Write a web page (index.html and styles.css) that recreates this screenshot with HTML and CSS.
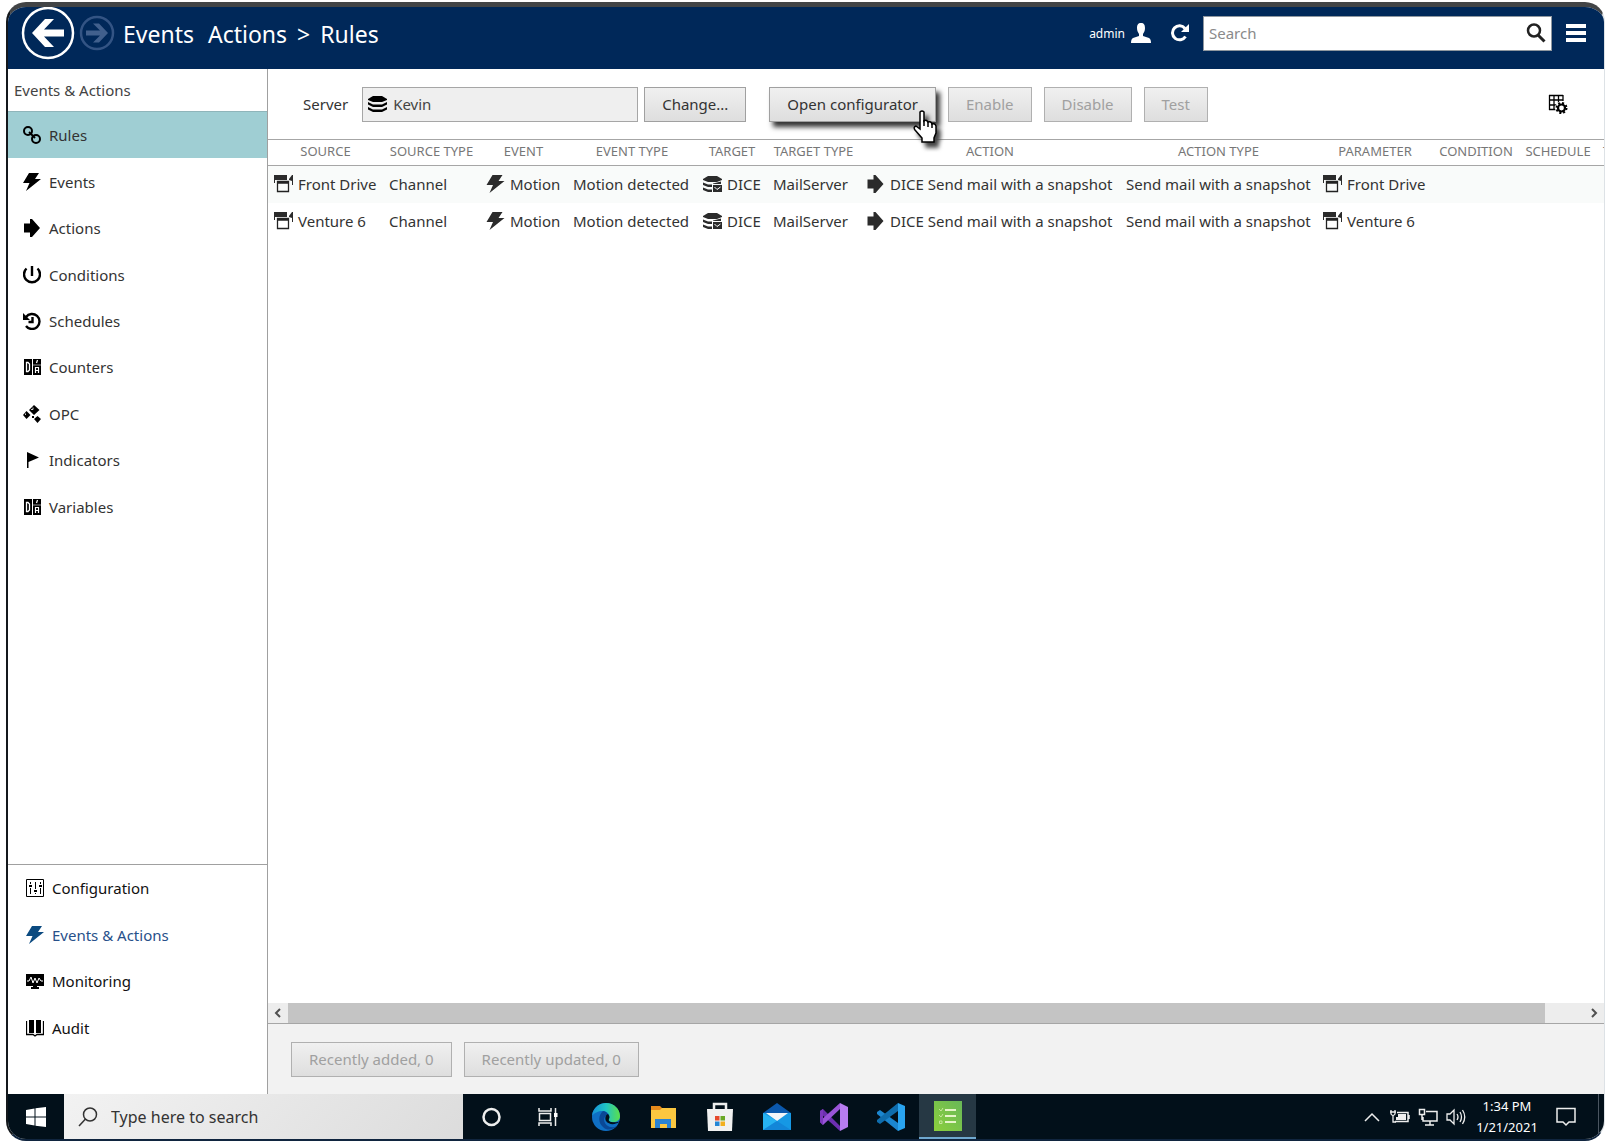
FILE: index.html
```html
<!DOCTYPE html>
<html lang="en">
    <head>
        <meta charset="utf-8">
        <title>Events Actions - Rules</title>
        <link rel="stylesheet" href="styles.css">
    </head>

    <body>
        <!-- shared icons -->
        <svg class="sprite" aria-hidden="true">
            <symbol id="bolt" viewBox="0 0 18 18"><path d="M6 0H16L12 6H18L3 18L6.500 10H0Z"/></symbol>
            <symbol id="arrow" viewBox="0 0 18 18"><path d="M1 4.500H7V0H9L17 9L9 18H7V13.500H1Z"/></symbol>
            <symbol id="counter" viewBox="0 0 18 18">
                <path d="M1 1H9V17H1ZM10 1H18V17H10Z"/>
                <path d="M3.500 4.500H5L6.500 6V12L5 13.500H3.500Z" fill="none" stroke="#fff" stroke-width="1.300"/>
                <path d="M14.500 2L13.500 5M12.500 15V9.500H15.500V15M12.500 12.500H15.500" fill="none" stroke="#fff" stroke-width="1.200"/>
                <path d="M10 7H18" stroke="#fff" stroke-width="0.600"/>
            </symbol>
            <symbol id="channel" viewBox="0 0 19 18">
                <path d="M0 0H13V5H1V8H0ZM15 4L18 0H19V10H18V6L15 5Z"/>
                <path d="M3.500 6.500H14.500V16.500H3.500ZM3 8H15" fill="none" stroke="#222" stroke-width="1.300"/>
            </symbol>
            <symbol id="server" viewBox="0 0 19 18">
                <path d="M0 4L5 1H14L19 4V5L14 7H5L0 5Z"/>
                <path d="M0 7L5 9.500H14L19 7V9.500L14 12H5L0 9.500Z"/>
                <path d="M0 12L5 14.500H14L19 12V14.500L14 17H5L0 14.500Z"/>
            </symbol>
            <symbol id="mailserver" viewBox="0 0 19 18">
                <path d="M0 4L5 1H14L19 4V5L14 7H5L0 5Z"/>
                <path d="M0 7.500L5 9.500H9V12H5L0 10ZM0 12.500L5 14.500H9V17H5L0 15ZM10 8.500L18 6.500V9H10Z"/>
                <rect x="10" y="10" width="9" height="7"/>
                <path d="M11.500 12L14 14.500L17.500 12" fill="none" stroke="#fff"/>
            </symbol>
        </svg>

        <div class="screen">
            <header class="topbar">
                <button class="back-button" aria-label="Back">
                    <svg viewBox="0 0 54 54"><circle cx="27" cy="27" r="25" fill="none" stroke="#fff" stroke-width="2.500"/><path d="M11 27L24 13H33L23 23.500H43V30.500H23L33 41H24Z" fill="#fff"/></svg>
                </button>
                <button class="forward-button" aria-label="Forward">
                    <svg viewBox="0 0 36 36"><circle cx="18" cy="18" r="16" fill="none" stroke="#335484" stroke-width="2.500"/><path d="M29 18L20 8.500H14L21 15.500H7V20.500H21L14 27.500H20Z" fill="#41608d"/></svg>
                </button>
                <h1><span class="area">Events</span><span>Actions</span><span>&gt;</span><span>Rules</span></h1>
                <a href="#" class="user">admin
                    <svg viewBox="0 0 20 20"><path d="M10 0C13 0 14 2 14 5C14 8 13 9 12 11V13L18 15Q20 16 20 20H0Q0 16 2 15L8 13V11C7 9 6 8 6 5C6 2 7 0 10 0Z"/></svg>
                </a>
                <button class="refresh-button" aria-label="Refresh">
                    <svg viewBox="0 0 18 18"><path d="M14.500 12.500A7 7 0 1 1 14 4.500" fill="none" stroke="#fff" stroke-width="3"/><path d="M18 0V8H10Z" fill="#fff"/></svg>
                </button>
                <div class="top-search">
                    <input type="text" placeholder="Search" aria-label="Search">
                    <svg viewBox="0 0 20 20"><circle cx="8" cy="7.500" r="6" fill="none" stroke="#222" stroke-width="2.500"/><path d="M12 12L18.500 18.500" stroke="#222" stroke-width="3"/></svg>
                </div>
                <button class="menu-button" aria-label="Menu">
                    <svg viewBox="0 0 20 20"><path d="M0 1H20V5H0ZM0 8H20V12H0ZM0 15H20V19H0Z" fill="#fff"/></svg>
                </button>
            </header>

            <div class="content">
                <aside class="sidebar">
                    <h2>Events &amp; Actions</h2>
                    <nav class="side-list">
                        <a href="#" class="active"><svg viewBox="0 0 18 18"><g fill="none" stroke="#000" stroke-width="2"><circle cx="5" cy="5" r="4"/><circle cx="13" cy="13" r="4"/><path d="M6 6L12 12"/></g></svg>Rules</a>
                        <a href="#"><svg><use href="#bolt"/></svg>Events</a>
                        <a href="#"><svg><use href="#arrow"/></svg>Actions</a>
                        <a href="#"><svg viewBox="0 0 18 18"><path d="M3.500 2.500A8 8 0 1 0 14.500 2.500M9 0V10" fill="none" stroke="#000" stroke-width="2.400"/></svg>Conditions</a>
                        <a href="#"><svg viewBox="0 0 18 18"><path d="M3 5A7.500 7.500 0 1 1 3 14M9.500 5V10H5.500" fill="none" stroke="#000" stroke-width="2.400"/><path d="M0 1V8H7Z"/></svg>Schedules</a>
                        <a href="#"><svg><use href="#counter"/></svg>Counters</a>
                        <a href="#"><svg viewBox="0 0 18 18"><path d="M11 0L16.500 5L11 10L6 5ZM3.500 6L7.500 10L3.500 14L0 10ZM14.500 11L18 14L14.500 18L11 14ZM9 11H11V13H9Z"/><path d="M2.500 8.500V10M8 4.500H10V2.500" fill="none" stroke="#fff" stroke-width="0.800"/></svg>OPC</a>
                        <a href="#"><svg viewBox="0 0 18 18"><path d="M4 1L16 6.500L5.500 11V17H4Z"/></svg>Indicators</a>
                        <a href="#"><svg><use href="#counter"/></svg>Variables</a>
                    </nav>
                    <nav class="side-list modules">
                        <a href="#"><svg viewBox="0 0 18 18"><path d="M0.500 0.500H17.500V17.500H0.500ZM4.500 3V5M4.500 9V15M9.500 3V10M9.500 14V15M14.500 3V5M14.500 9V15" fill="none" stroke="#000"/><path d="M3 6H6V8H3ZM8 11H11V13H8ZM13 6H16V8H13Z"/></svg>Configuration</a>
                        <a href="#" class="current"><svg><use href="#bolt"/></svg>Events &amp; Actions</a>
                        <a href="#"><svg viewBox="0 0 18 18"><path d="M0 2H18V14H11V15H13V17H5V15H7V14H0Z"/><path d="M1 9H3L5 5L7 11L9 6L11 11L13 6L15 9H17" fill="none" stroke="#fff"/></svg>Monitoring</a>
                        <a href="#"><svg viewBox="0 0 18 18"><path d="M3 1H8V14H3ZM10 1H15V14H10Z"/><path d="M0.500 2V15.500H7L9 17L11 15.500H17.500V2" fill="none" stroke="#000" stroke-width="1.300"/></svg>Audit</a>
                    </nav>
                </aside>

                <main class="main">
                    <div class="toolbar">
                        <label for="server-name">Server</label>
                        <div class="server-field">
                            <svg><use href="#server"/></svg>
                            <input type="text" id="server-name" value="Kevin" readonly>
                        </div>
                        <button class="btn change-button">Change...</button>
                        <button class="btn open-button">Open configurator
                            <svg class="pointer" viewBox="0 0 26 34"><path d="M7 2Q9 0 11 2V11Q13 9 15 12Q18 11 19 14Q22 13 23 16V23L21 28V32H9V28L2 20Q0 17 3 16L7 19Z" fill="#fff" stroke="#000" stroke-width="1.500"/><path d="M11 10V16M15 12V17M19 14V18" stroke="#000" stroke-width="1.500"/></svg>
                        </button>
                        <button class="btn" disabled>Enable</button>
                        <button class="btn" disabled>Disable</button>
                        <button class="btn" disabled>Test</button>
                        <button class="columns-button" aria-label="Configure columns">
                            <svg viewBox="0 0 20 20"><path d="M1 1.500H15M1 6H15M1 11H9M1 15.500H8M1.500 1V16M6 1V16M10.500 1V9M15 1V7" fill="none" stroke="#000" stroke-width="1.300"/><circle cx="13.500" cy="14" r="6.500" fill="#fff"/><circle cx="13.500" cy="14" r="3.500" fill="none" stroke="#000" stroke-width="2.200"/><circle cx="13.500" cy="14" r="5" fill="none" stroke="#000" stroke-width="2" stroke-dasharray="2 1.927"/></svg>
                        </button>
                    </div>

                    <div class="table-wrap">
                        <table class="rules-table">
                            <colgroup>
                                <col class="c-source"><col class="c-source-type"><col class="c-event"><col class="c-event-type"><col class="c-target"><col class="c-target-type">
                                <col class="c-action"><col class="c-action-type"><col class="c-parameter"><col class="c-condition"><col class="c-schedule"><col class="c-tags">
                            </colgroup>
                            <thead>
                                <tr>
                                    <th>SOURCE</th><th>SOURCE TYPE</th><th>EVENT</th><th>EVENT TYPE</th><th>TARGET</th><th>TARGET TYPE</th>
                                    <th>ACTION</th><th>ACTION TYPE</th><th>PARAMETER</th><th>CONDITION</th><th>SCHEDULE</th><th class="last">T</th>
                                </tr>
                            </thead>
                            <tbody>
                                <tr>
                                    <td><svg><use href="#channel"/></svg>Front Drive</td>
                                    <td>Channel</td>
                                    <td><svg><use href="#bolt"/></svg>Motion</td>
                                    <td>Motion detected</td>
                                    <td><svg><use href="#mailserver"/></svg>DICE</td>
                                    <td>MailServer</td>
                                    <td><svg><use href="#arrow"/></svg>DICE Send mail with a snapshot</td>
                                    <td>Send mail with a snapshot</td>
                                    <td><svg><use href="#channel"/></svg>Front Drive</td>
                                    <td></td><td></td><td></td>
                                </tr>
                                <tr>
                                    <td><svg><use href="#channel"/></svg>Venture 6</td>
                                    <td>Channel</td>
                                    <td><svg><use href="#bolt"/></svg>Motion</td>
                                    <td>Motion detected</td>
                                    <td><svg><use href="#mailserver"/></svg>DICE</td>
                                    <td>MailServer</td>
                                    <td><svg><use href="#arrow"/></svg>DICE Send mail with a snapshot</td>
                                    <td>Send mail with a snapshot</td>
                                    <td><svg><use href="#channel"/></svg>Venture 6</td>
                                    <td></td><td></td><td></td>
                                </tr>
                            </tbody>
                        </table>
                    </div>

                    <div class="scrollbar">
                        <button aria-label="Scroll left"><svg viewBox="0 0 10 10"><path d="M7 1L3 5L7 9" fill="none" stroke="#505050" stroke-width="2"/></svg></button>
                        <div class="track"><div class="thumb"></div></div>
                        <button aria-label="Scroll right"><svg viewBox="0 0 10 10"><path d="M3 1L7 5L3 9" fill="none" stroke="#505050" stroke-width="2"/></svg></button>
                    </div>

                    <footer class="footer">
                        <button class="btn" disabled>Recently added, 0</button>
                        <button class="btn" disabled>Recently updated, 0</button>
                    </footer>
                </main>
            </div>

            <div class="taskbar">
                <button class="start" aria-label="Start">
                    <svg viewBox="0 0 20 20"><path d="M0 3L8.500 1.500V9.500H0ZM9.500 1.300L20 0V9.500H9.500ZM0 10.500H8.500V18.500L0 17ZM9.500 10.500H20V20L9.500 18.700Z" fill="#fff"/></svg>
                </button>
                <div class="task-search">
                    <svg viewBox="0 0 20 20"><circle cx="12" cy="7.500" r="6.500" fill="none" stroke="#333" stroke-width="1.500"/><path d="M7.500 12L1 19" stroke="#333" stroke-width="1.500"/></svg>
                    <input type="text" placeholder="Type here to search" aria-label="Type here to search">
                </div>
                <div class="task-apps">
                    <button aria-label="Cortana"><svg viewBox="0 0 30 30"><circle cx="14.500" cy="15" r="8" fill="none" stroke="#eee" stroke-width="2.500"/></svg></button>
                    <button aria-label="Task view"><svg viewBox="0 0 30 30"><path d="M5 6V9H17V6M5 24V21H17V24M5.500 11.500H16.500V18.500H5.500ZM21.500 6V24" fill="none" stroke="#eee" stroke-width="1.500"/><path d="M20 11H23.500V15H20Z" fill="#fff"/></svg></button>
                    <button aria-label="Edge">
                        <svg viewBox="0 0 30 30">
                            <defs><linearGradient id="edge-top" x1="0" x2="1"><stop offset="0" stop-color="#1590d8"/><stop offset="0.500" stop-color="#20c4c4"/><stop offset="1" stop-color="#5be04a"/></linearGradient></defs>
                            <circle cx="15" cy="15" r="14" fill="#0f6fc4"/>
                            <path d="M1 14C2 5 9 1 15 1C23 1 29 7 29 14C29 18 26 20 22 20C19 20 17 19 18 17C20 13 16 9 12 9C7 9 3 11 1 14Z" fill="url(#edge-top)"/>
                            <path d="M12 9C7 13 7 21 12 25C16 29 22 28 26 24C20 27 14 24 13 18C13 15 15 13 17 13C16 10 14 9 12 9Z" fill="#0a4896"/>
                            <path d="M17 12C14 13 14 17 15 19C18 23 24 23 28 20V23L30 22V19C26 21 16 21 18 17C19 15 18 13 17 12Z" fill="#02101a"/>
                        </svg>
                    </button>
                    <button aria-label="File Explorer"><svg viewBox="0 0 30 30"><path d="M3 4H12L14 6H27V12H3Z" fill="#e58a1c"/><path d="M3 8H12L14 6H28V26H3Z" fill="#fbc740"/><path d="M7 17H23V26H19V22H12V26H7Z" fill="#2a83d2"/></svg></button>
                    <button aria-label="Microsoft Store"><svg viewBox="0 0 30 30"><path d="M9 10V2H21V10" fill="none" stroke="#eee" stroke-width="2.500"/><path d="M2 7H28L27 29H3Z" fill="#f1f1f1"/><path d="M10 14H14.500V18.500H10Z" fill="#e6492d"/><path d="M15.500 14H20V18.500H15.500Z" fill="#6aa825"/><path d="M10 19.500H14.500V24H10Z" fill="#2486d6"/><path d="M15.500 19.500H20V24H15.500Z" fill="#f3b01f"/></svg></button>
                    <button aria-label="Mail"><svg viewBox="0 0 30 30"><path d="M1 11L15 1L29 11Z" fill="#0b58ac"/><path d="M1 11H29V28H1Z" fill="#1698e4"/><path d="M4 11H26L15 19Z" fill="#f2f4f8"/><path d="M1 11L15 19L1 28Z" fill="#27b2f2"/><path d="M1 28L15 19L29 28Z" fill="#1386d8"/></svg></button>
                    <button aria-label="Visual Studio"><svg viewBox="0 0 30 30"><path d="M1 9L4 7L21 24V29L1 11Z" fill="#6d2fb0"/><path d="M1 20L4 23L21 7V1L1 19Z" fill="#9a54d8"/><path d="M1 9L4 7V23L1 20Z" fill="#7c38bd"/><path d="M21 1L29 5V25L21 29Z" fill="#b77cf0"/></svg></button>
                    <button aria-label="Visual Studio Code"><svg viewBox="0 0 30 30"><path d="M1 10L4 8L22 21V29L1 12Z" fill="#1b86cf"/><path d="M1 20L4 22L22 9V1L1 18Z" fill="#0f6dad"/><path d="M22 1L29 4V26L22 29Z" fill="#29a4f0"/></svg></button>
                    <button class="running" aria-label="Rules configurator">
                        <svg viewBox="0 0 30 30">
                            <defs><linearGradient id="app-green" x1="0" x2="1" y1="1" y2="0"><stop offset="0" stop-color="#8bcf3c"/><stop offset="1" stop-color="#69b858"/></linearGradient></defs>
                            <path d="M1 0H29V30H1Z" fill="url(#app-green)"/><path d="M12 9H23M12 15H23M12 21H23" fill="none" stroke="#e6f4c9" stroke-width="1.800"/><path d="M6 8L8 10L10 7M6 14L8 16L10 13M6.500 20H9V22.500H6.500Z" fill="none" stroke="#c5e69a"/>
                        </svg>
                    </button>
                </div>
                <div class="tray">
                    <svg viewBox="0 0 20 20"><path d="M3 14L10 7L17 14" fill="none" stroke="#eee" stroke-width="1.500"/></svg>
                    <svg viewBox="0 0 20 20"><path d="M1 3V7Q3 10 5 7V3M0 5H6M3 9V15H6" fill="none" stroke="#eee" stroke-width="1.300"/><path d="M7 5.500H18V14.500H5M19 8V12" fill="none" stroke="#eee" stroke-width="1.500"/><path d="M8 7H16V13H6V10H8Z" fill="#eee"/></svg>
                    <svg viewBox="0 0 20 20"><path d="M8 4.500H19V14H5V10M12 14V18M7 18H16M1.500 2.500H6.500V7.500H1.500ZM4 8V13" fill="none" stroke="#eee" stroke-width="1.500"/></svg>
                    <svg viewBox="0 0 20 20"><path d="M1 7H4L8 3V17L4 13H1ZM11 7Q13 10 11 13M14 5Q17 10 14 15M16.500 3Q21 10 16.500 17" fill="none" stroke="#eee" stroke-width="1.300"/></svg>
                    <div class="clock"><span>1:34 PM</span><span>1/21/2021</span></div>
                    <svg viewBox="0 0 20 20"><path d="M1 1.500H19V15H13L10 18L7 15H1Z" fill="none" stroke="#eee" stroke-width="1.500"/></svg>
                </div>
            </div>
        </div>
    </body>
</html>
```
FILE: styles.css
```css
* {
    box-sizing: border-box;
}

body {
    margin: 0;
    height: 100vh;
    padding: 2px 9px 7px 6px;
    background-color: #fff;
    font-family: "Noto Sans", "Open Sans", sans-serif;
    font-size: 15px;
    color: #333;
}

button {
    padding: 0;
    border: none;
    background: none;
    font-family: inherit;
    font-size: 15px;
    color: #333;
}

input {
    min-width: 0;
    padding: 0;
    border: none;
    outline: none;
    background: none;
    font-family: inherit;
    font-size: 15px;
    color: #444;
}

a {
    color: inherit;
    text-decoration: none;
}

svg {
    display: block;
    flex: none;
}

.sprite {
    position: absolute;
    width: 0;
    height: 0;
}

.screen {
    height: 100%;
    display: flex;
    flex-direction: column;
    overflow: hidden;
    border-top: 5px solid #424446;
    border-left: 2px solid #14181c;
    border-bottom: 2px solid #10253f;
    border-right: 1px solid #dde2e6;
    border-radius: 20px;
}

/* top bar */

.topbar {
    display: flex;
    align-items: center;
    height: 62px;
    padding: 0 18px 10px 13px;
    background-color: #002859;
    color: #fff;
}

.back-button svg {
    width: 54px;
    height: 54px;
}

.forward-button {
    margin-left: 4px;
}

.forward-button svg {
    width: 36px;
    height: 36px;
}

.topbar h1 {
    flex: 1;
    display: flex;
    gap: 10px;
    margin: 2px 0 0 8px;
    font-size: 23px;
    font-weight: normal;
}

.topbar .area {
    margin-right: 4px;
}

.user {
    display: flex;
    align-items: center;
    gap: 6px;
    font-size: 12px;
}

.user svg {
    width: 20px;
    height: 20px;
    fill: #fff;
}

.refresh-button {
    margin: 0 14px 0 20px;
}

.refresh-button svg {
    width: 18px;
    height: 18px;
}

.top-search {
    display: flex;
    align-items: center;
    width: 349px;
    height: 35px;
    padding: 0 5px;
    border: 1px solid #8f979f;
    background-color: #fff;
}

.top-search input {
    flex: 1;
}

.top-search input::placeholder {
    color: #8a8a8a;
}

.top-search svg,
.menu-button svg {
    width: 20px;
    height: 20px;
}

.menu-button {
    margin-left: 14px;
}

/* layout */

.content {
    flex: 1;
    min-height: 0;
    display: grid;
    grid-template-columns: 260px 1fr;
}

.sidebar {
    display: flex;
    flex-direction: column;
    border-right: 1px solid #a0a0a0;
    background-color: #fff;
}

.sidebar h2 {
    height: 42px;
    margin: 0;
    padding-left: 6px;
    font-size: 15px;
    font-weight: normal;
    line-height: 42px;
    color: #444;
}

.side-list {
    display: flex;
    flex-direction: column;
    height: 419px;
}

.side-list a {
    flex: 1;
    display: flex;
    align-items: center;
    gap: 8px;
    padding-left: 15px;
}

.side-list svg {
    width: 18px;
    height: 18px;
}

.side-list .active {
    border-top: 1px solid #8fb5ba;
    background-color: #9fced3;
}

.modules {
    height: 230px;
    margin-top: auto;
    padding-bottom: 43px;
    border-top: 1px solid #a0a0a0;
    color: #111;
}

.modules a {
    padding-left: 18px;
}

.modules .current {
    color: #27508a;
    fill: #0b4a80;
}

/* main area */

.main {
    display: flex;
    flex-direction: column;
    min-width: 0;
    background-color: #fff;
}

.toolbar {
    display: flex;
    align-items: center;
    gap: 12px;
    height: 70px;
    padding: 0 36px 0 35px;
}

.server-field {
    display: flex;
    align-items: center;
    gap: 6px;
    width: 276px;
    height: 35px;
    margin-left: 2px;
    padding: 0 5px;
    border: 1px solid #a6a6a6;
    background-color: #efefef;
}

.server-field svg {
    width: 19px;
    height: 18px;
}

.btn {
    height: 35px;
    padding: 0 17px;
    border: 1px solid #a0a0a0;
    background: linear-gradient(#f0f0f0, #dedede);
    white-space: nowrap;
}

.btn:disabled {
    border-color: #b0b0b0;
    color: #a0a0a0;
}

.change-button {
    margin-left: -6px;
    margin-right: 11px;
}

.open-button {
    position: relative;
    box-shadow: 4px 5px 5px #333;
}

.pointer {
    position: absolute;
    right: -4px;
    top: 22px;
    width: 26px;
    height: 34px;
    filter: drop-shadow(4px 5px 2px #444);
}

.columns-button {
    margin-left: auto;
}

.columns-button svg {
    width: 20px;
    height: 20px;
}

/* rules table */

.table-wrap {
    flex: 1;
    overflow: hidden;
}

.rules-table {
    table-layout: fixed;
    width: 1409px;
    border-collapse: collapse;
    white-space: nowrap;
}

.rules-table th {
    height: 26px;
    padding: 0 0 3px;
    border-top: 1px solid #a6a6a6;
    border-bottom: 1px solid #a6a6a6;
    font-size: 13px;
    font-weight: normal;
    line-height: 18px;
    color: #777;
}

.rules-table .last {
    padding-left: 6px;
    text-align: left;
}

.rules-table td {
    height: 37px;
    padding: 0 0 0 6px;
}

.rules-table tbody tr:first-child {
    background-color: #f9fbfa;
}

.rules-table td svg {
    display: inline-block;
    width: 19px;
    height: 18px;
    margin-right: 5px;
    vertical-align: -3px;
    fill: #2b2b2b;
}

.c-source { width: 115px; }
.c-source-type { width: 97px; }
.c-event { width: 87px; }
.c-event-type { width: 130px; }
.c-target { width: 70px; }
.c-target-type { width: 93px; }
.c-action { width: 260px; }
.c-action-type { width: 197px; }
.c-parameter { width: 116px; }
.c-condition { width: 86px; }
.c-schedule { width: 78px; }
.c-tags { width: 80px; }

.scrollbar {
    display: flex;
    height: 21px;
    border-bottom: 1px solid #a6a6a6;
    background-color: #ededed;
}

.scrollbar button {
    display: flex;
    align-items: center;
    justify-content: center;
    width: 20px;
}

.scrollbar svg {
    width: 10px;
    height: 10px;
}

.track {
    flex: 1;
}

.thumb {
    width: 97%;
    height: 100%;
    background-color: #c4c4c4;
}

.footer {
    display: flex;
    align-items: center;
    gap: 12px;
    height: 70px;
    padding-left: 23px;
    background-color: #f2f2f2;
}

/* taskbar */

.taskbar {
    display: flex;
    height: 45px;
    background-color: #02101a;
    color: #fff;
}

.start {
    display: flex;
    align-items: center;
    justify-content: center;
    width: 56px;
}

.start svg,
.task-search svg,
.tray svg {
    width: 20px;
    height: 20px;
}

.task-search {
    display: flex;
    align-items: center;
    gap: 13px;
    width: 399px;
    padding-left: 14px;
    background: linear-gradient(135deg, #f2f2f2, #dcdcdc);
}

.task-search input {
    flex: 1;
    font-size: 16px;
}

.task-search input::placeholder {
    color: #333;
}

.task-apps {
    display: flex;
}

.task-apps button {
    display: flex;
    align-items: center;
    justify-content: center;
    width: 57px;
}

.task-apps svg {
    width: 30px;
    height: 30px;
}

.task-apps .running {
    border-bottom: 2px solid #6fa8cf;
    background-color: #263844;
}

.tray {
    display: flex;
    align-items: center;
    gap: 8px;
    margin-left: auto;
    margin-right: 5px;
    padding-right: 22px;
    border-right: 1px solid #4a5560;
}

.clock {
    display: flex;
    flex-direction: column;
    align-items: center;
    width: 66px;
    margin-right: 8px;
    font-size: 13px;
    line-height: 21px;
}
```
